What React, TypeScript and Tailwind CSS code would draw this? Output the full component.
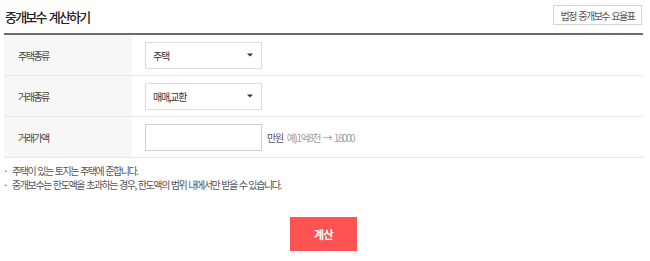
import React from "react";

function Caret() {
  return (
    <svg width="6" height="4" viewBox="0 0 6 4" className="shrink-0">
      <path d="M0 0.5h6L3 3.5z" fill="#333" />
    </svg>
  );
}

function FakeSelect({ value }: { value: string }) {
  return (
    <div className="w-[117px] h-[27px] border border-[#dcdcdc] bg-white flex items-center justify-between pl-[7px] pr-[8px] text-[10px] tracking-[-1.3px] text-[#333]">
      <span>{value}</span>
      <Caret />
    </div>
  );
}

function Row({ label, children }: { label: string; children: React.ReactNode }) {
  return (
    <div className="flex h-[41px] border-b border-[#e8e8e8]">
      <div className="w-[128px] bg-[#f7f7f7] flex items-center pl-[14px] text-[10px] tracking-[-1.5px] text-[#444]">
        {label}
      </div>
      <div className="flex-1 flex items-center pl-[13px]">{children}</div>
    </div>
  );
}

export default function App() {
  return (
    <div className="w-[650px] h-[261px] bg-white font-['Noto_Sans_CJK_KR',sans-serif] text-[#333]">
      {/* title bar */}
      <div className="flex justify-between h-[33px] pl-[5px] pr-[8px]">
        <h1 className="self-center pt-[1px] text-[13px] font-medium tracking-[-1.8px] [word-spacing:2px] text-[#222]">
          중개보수 계산하기
        </h1>
        <button className="self-start mt-[5px] h-[20px] w-[89px] border border-[#d4d4d4] bg-white text-[10px] tracking-[-1.5px] [word-spacing:1.5px] text-[#555]">
          법정 중개보수 요율표
        </button>
      </div>

      <div className="ml-[4px] w-[639px]">
        <div className="border-t-2 border-[#6b6b6b]">
          <Row label="주택종류">
            <FakeSelect value="주택" />
          </Row>
          <Row label="거래종류">
            <FakeSelect value="매매,교환" />
          </Row>
          <Row label="거래가액">
            <input
              type="text"
              className="w-[117px] h-[27px] border border-[#cfcfcf] bg-white outline-none"
            />
            <span className="ml-[5px] text-[10px] tracking-[-1.3px] text-[#5a4f6a]">만원</span>
            <span className="ml-[4px] text-[10px] tracking-[-1.5px] [word-spacing:2px] text-[#a0a0a0]">
              예)1억8천 → 18000
            </span>
          </Row>
        </div>

        {/* notes */}
        <ul className="mt-[6px] -ml-[1px] text-[10px] leading-[14px] tracking-[-1.4px] [word-spacing:1px] text-[#555]">
          <li className="flex">
            <span className="w-[9px]">·</span>
            <span>주택이 있는 토지는 주택에 준합니다.</span>
          </li>
          <li className="flex">
            <span className="w-[9px]">·</span>
            <span>중개보수는 한도액을 초과하는 경우, 한도액의 범위 내에서만 받을 수 있습니다.</span>
          </li>
        </ul>

        <div className="flex justify-center mt-[25px]">
          <button className="w-[67px] h-[34px] bg-[#ff5252] text-white text-[11px] font-bold tracking-[-0.5px]">
            계산
          </button>
        </div>
      </div>
    </div>
  );
}
